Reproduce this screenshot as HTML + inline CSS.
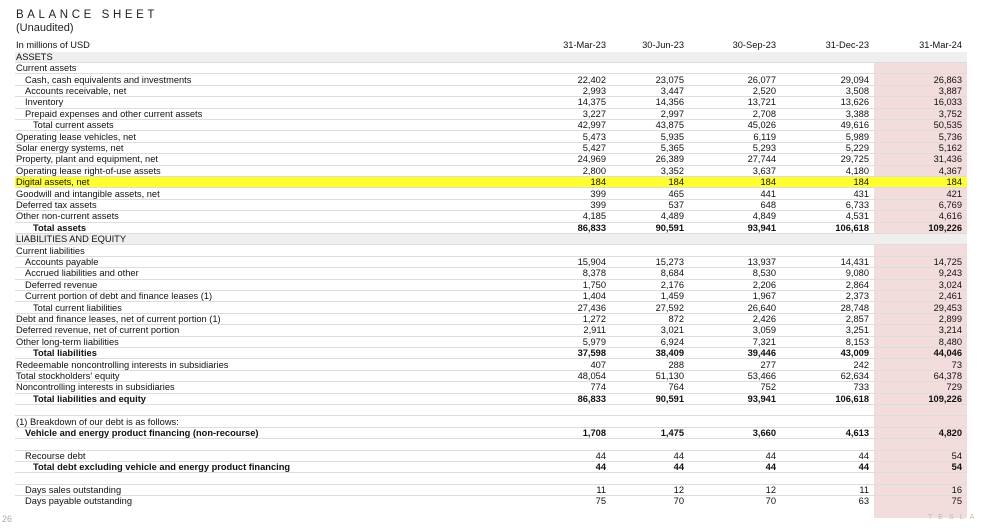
<!DOCTYPE html>
<html><head><meta charset="utf-8"><style>
body{margin:0;width:984px;height:531px;background:#fff;position:relative;overflow:hidden;font-family:"Liberation Sans",sans-serif;color:#111;}
.t{position:absolute;left:16px;top:9px;font-size:11.5px;letter-spacing:3.6px;color:#222}
.u{position:absolute;left:16px;top:22px;font-size:11px;color:#222}
.pink{position:absolute;left:874px;top:63px;width:93px;height:455px;background:#f3dcdc}
.r{position:absolute;left:15px;width:952px;height:11.4px;line-height:11.4px;font-size:9.3px;box-sizing:border-box;border-bottom:1px solid #ddd}
.r span{position:absolute;top:0}
.l{left:1px}.l1{left:10px}.l2{left:18px}
.a{right:361px}.b{right:283px}.c{right:191px}.d{right:98px}.e{right:5px}
.g{background:#efefef}
.y{background:#ffff30}
.bd{font-weight:bold}
.nb{border-bottom:none}
.h span{font-size:9.3px}
</style></head><body>
<div class="pink"></div>
<div class="t">BALANCE SHEET</div>
<div class="u">(Unaudited)</div>
<div class="r nb h" style="top:40.3px"><span class="l">In millions of USD</span><span class="a">31-Mar-23</span><span class="b">30-Jun-23</span><span class="c">30-Sep-23</span><span class="d">31-Dec-23</span><span class="e">31-Mar-24</span></div>
<div class="r g" style="top:51.7px"><span class="l">ASSETS</span></div>
<div class="r" style="top:63.1px"><span class="l">Current assets</span></div>
<div class="r" style="top:74.5px"><span class="l1">Cash, cash equivalents and investments</span><span class="a">22,402</span><span class="b">23,075</span><span class="c">26,077</span><span class="d">29,094</span><span class="e">26,863</span></div>
<div class="r" style="top:85.9px"><span class="l1">Accounts receivable, net</span><span class="a">2,993</span><span class="b">3,447</span><span class="c">2,520</span><span class="d">3,508</span><span class="e">3,887</span></div>
<div class="r" style="top:97.3px"><span class="l1">Inventory</span><span class="a">14,375</span><span class="b">14,356</span><span class="c">13,721</span><span class="d">13,626</span><span class="e">16,033</span></div>
<div class="r" style="top:108.7px"><span class="l1">Prepaid expenses and other current assets</span><span class="a">3,227</span><span class="b">2,997</span><span class="c">2,708</span><span class="d">3,388</span><span class="e">3,752</span></div>
<div class="r" style="top:120.1px"><span class="l2">Total current assets</span><span class="a">42,997</span><span class="b">43,875</span><span class="c">45,026</span><span class="d">49,616</span><span class="e">50,535</span></div>
<div class="r" style="top:131.5px"><span class="l">Operating lease vehicles, net</span><span class="a">5,473</span><span class="b">5,935</span><span class="c">6,119</span><span class="d">5,989</span><span class="e">5,736</span></div>
<div class="r" style="top:142.9px"><span class="l">Solar energy systems, net</span><span class="a">5,427</span><span class="b">5,365</span><span class="c">5,293</span><span class="d">5,229</span><span class="e">5,162</span></div>
<div class="r" style="top:154.3px"><span class="l">Property, plant and equipment, net</span><span class="a">24,969</span><span class="b">26,389</span><span class="c">27,744</span><span class="d">29,725</span><span class="e">31,436</span></div>
<div class="r" style="top:165.7px"><span class="l">Operating lease right-of-use assets</span><span class="a">2,800</span><span class="b">3,352</span><span class="c">3,637</span><span class="d">4,180</span><span class="e">4,367</span></div>
<div class="r y" style="top:177.1px"><span class="l">Digital assets, net</span><span class="a">184</span><span class="b">184</span><span class="c">184</span><span class="d">184</span><span class="e">184</span></div>
<div class="r" style="top:188.5px"><span class="l">Goodwill and intangible assets, net</span><span class="a">399</span><span class="b">465</span><span class="c">441</span><span class="d">431</span><span class="e">421</span></div>
<div class="r" style="top:199.9px"><span class="l">Deferred tax assets</span><span class="a">399</span><span class="b">537</span><span class="c">648</span><span class="d">6,733</span><span class="e">6,769</span></div>
<div class="r" style="top:211.3px"><span class="l">Other non-current assets</span><span class="a">4,185</span><span class="b">4,489</span><span class="c">4,849</span><span class="d">4,531</span><span class="e">4,616</span></div>
<div class="r bd" style="top:222.7px"><span class="l2">Total assets</span><span class="a">86,833</span><span class="b">90,591</span><span class="c">93,941</span><span class="d">106,618</span><span class="e">109,226</span></div>
<div class="r g" style="top:234.1px"><span class="l">LIABILITIES AND EQUITY</span></div>
<div class="r" style="top:245.5px"><span class="l">Current liabilities</span></div>
<div class="r" style="top:256.9px"><span class="l1">Accounts payable</span><span class="a">15,904</span><span class="b">15,273</span><span class="c">13,937</span><span class="d">14,431</span><span class="e">14,725</span></div>
<div class="r" style="top:268.3px"><span class="l1">Accrued liabilities and other</span><span class="a">8,378</span><span class="b">8,684</span><span class="c">8,530</span><span class="d">9,080</span><span class="e">9,243</span></div>
<div class="r" style="top:279.7px"><span class="l1">Deferred revenue</span><span class="a">1,750</span><span class="b">2,176</span><span class="c">2,206</span><span class="d">2,864</span><span class="e">3,024</span></div>
<div class="r" style="top:291.1px"><span class="l1">Current portion of debt and finance leases (1)</span><span class="a">1,404</span><span class="b">1,459</span><span class="c">1,967</span><span class="d">2,373</span><span class="e">2,461</span></div>
<div class="r" style="top:302.5px"><span class="l2">Total current liabilities</span><span class="a">27,436</span><span class="b">27,592</span><span class="c">26,640</span><span class="d">28,748</span><span class="e">29,453</span></div>
<div class="r" style="top:313.9px"><span class="l">Debt and finance leases, net of current portion (1)</span><span class="a">1,272</span><span class="b">872</span><span class="c">2,426</span><span class="d">2,857</span><span class="e">2,899</span></div>
<div class="r" style="top:325.3px"><span class="l">Deferred revenue, net of current portion</span><span class="a">2,911</span><span class="b">3,021</span><span class="c">3,059</span><span class="d">3,251</span><span class="e">3,214</span></div>
<div class="r" style="top:336.7px"><span class="l">Other long-term liabilities</span><span class="a">5,979</span><span class="b">6,924</span><span class="c">7,321</span><span class="d">8,153</span><span class="e">8,480</span></div>
<div class="r bd" style="top:348.1px"><span class="l2">Total liabilities</span><span class="a">37,598</span><span class="b">38,409</span><span class="c">39,446</span><span class="d">43,009</span><span class="e">44,046</span></div>
<div class="r" style="top:359.5px"><span class="l">Redeemable noncontrolling interests in subsidiaries</span><span class="a">407</span><span class="b">288</span><span class="c">277</span><span class="d">242</span><span class="e">73</span></div>
<div class="r" style="top:370.9px"><span class="l">Total stockholders' equity</span><span class="a">48,054</span><span class="b">51,130</span><span class="c">53,466</span><span class="d">62,634</span><span class="e">64,378</span></div>
<div class="r" style="top:382.3px"><span class="l">Noncontrolling interests in subsidiaries</span><span class="a">774</span><span class="b">764</span><span class="c">752</span><span class="d">733</span><span class="e">729</span></div>
<div class="r bd" style="top:393.7px"><span class="l2">Total liabilities and equity</span><span class="a">86,833</span><span class="b">90,591</span><span class="c">93,941</span><span class="d">106,618</span><span class="e">109,226</span></div>
<div class="r" style="top:405.1px"></div>
<div class="r" style="top:416.5px"><span class="l">(1) Breakdown of our debt is as follows:</span></div>
<div class="r bd" style="top:427.9px"><span class="l1" style="left:10px">Vehicle and energy product financing (non-recourse)</span><span class="a">1,708</span><span class="b">1,475</span><span class="c">3,660</span><span class="d">4,613</span><span class="e">4,820</span></div>
<div class="r" style="top:439.3px"></div>
<div class="r" style="top:450.7px"><span class="l1">Recourse debt</span><span class="a">44</span><span class="b">44</span><span class="c">44</span><span class="d">44</span><span class="e">54</span></div>
<div class="r bd" style="top:462.1px"><span class="l2">Total debt excluding vehicle and energy product financing</span><span class="a">44</span><span class="b">44</span><span class="c">44</span><span class="d">44</span><span class="e">54</span></div>
<div class="r" style="top:473.5px"></div>
<div class="r" style="top:484.9px"><span class="l1">Days sales outstanding</span><span class="a">11</span><span class="b">12</span><span class="c">12</span><span class="d">11</span><span class="e">16</span></div>
<div class="r nb" style="top:496.3px"><span class="l1">Days payable outstanding</span><span class="a">75</span><span class="b">70</span><span class="c">70</span><span class="d">63</span><span class="e">75</span></div>
<div style="position:absolute;left:2px;top:514px;font-size:9px;color:#aaa">26</div>
<div style="position:absolute;left:928px;top:514px;font-size:7px;letter-spacing:6px;color:#bbb">TESLA</div>
</body></html>
